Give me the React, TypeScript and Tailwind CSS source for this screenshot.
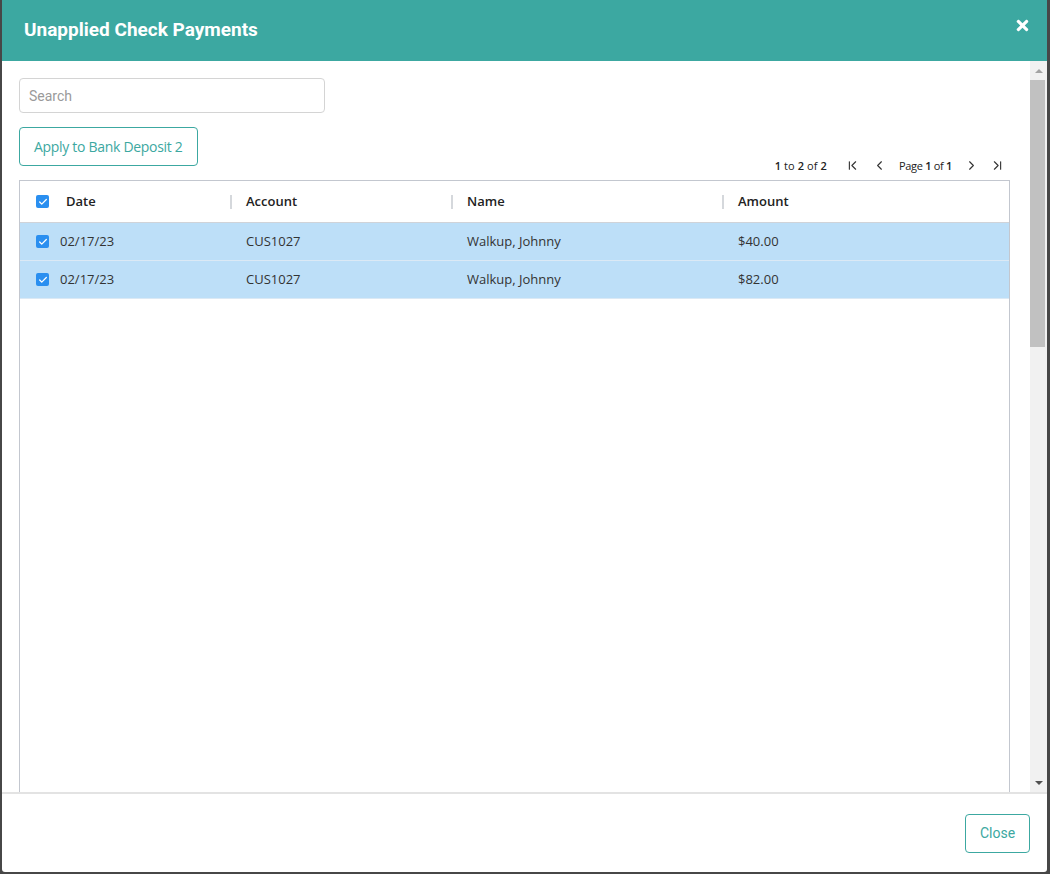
import React from 'react';
import { ChevronFirst, ChevronLast, ChevronLeft, ChevronRight, Check } from 'lucide-react';
import { FaTimes } from 'react-icons/fa';

const ROWS = [
  { date: '02/17/23', account: 'CUS1027', name: 'Walkup, Johnny', amount: '$40.00' },
  { date: '02/17/23', account: 'CUS1027', name: 'Walkup, Johnny', amount: '$82.00' },
];

function Box() {
  return (
    <span className="flex items-center justify-center w-[13px] h-[13px] rounded-[2px] bg-[#2a8ff0] shrink-0">
      <Check className="w-[10px] h-[10px] text-white" strokeWidth={3} />
    </span>
  );
}

function Sep() {
  return <span className="w-[2px] h-[14px] bg-[#d5d8dc] shrink-0" />;
}

export default function App() {
  return (
    <div className="h-[874px] w-[1050px] bg-[#474747] pl-[2px] pr-[3px] pb-[2px] font-['Roboto',sans-serif]">
      <div className="h-full flex flex-col bg-white rounded-b-[3px] overflow-hidden">

        {/* Header */}
        <div className="h-[61px] shrink-0 bg-[#3ca8a1] flex items-center justify-between pl-[22px] pr-[16px]">
          <h1 className="text-[19px] font-bold text-white">Unapplied Check Payments</h1>
          <FaTimes className="text-white w-[17px] h-[17px] -mt-[10px]" />
        </div>

        {/* Body */}
        <div className="flex-1 flex min-h-0">
          <div className="flex-1 flex flex-col min-h-0 pl-[17px] pr-[20px] pt-[17px]">
            <input
              placeholder="Search"
              className="w-[306px] h-[35px] border border-[#d4d4d4] rounded-[4px] px-[9px] text-[14px] text-[#333] placeholder:text-[#9a9a9a] outline-none font-['Roboto',sans-serif]"
            />

            <div className="flex items-start justify-between h-[53px] mt-[14px]">
              <button className="h-[39px] px-[14px] border border-[#3ca8a1] rounded-[4px] text-[#3ca8a1] text-[14px] font-['Open_Sans',sans-serif] tracking-[-0.3px]">
                Apply to Bank Deposit 2
              </button>
              <div className="self-end pb-[6px] pr-[5px] flex items-center text-[11px] text-[#222] font-['Open_Sans',sans-serif]">
                <span className="tracking-[0.1px]"><b className="font-semibold">1</b> to <b className="font-semibold">2</b> of <b className="font-semibold">2</b></span>
                <ChevronFirst className="w-[15px] h-[15px] ml-[18px] text-[#333]" strokeWidth={1.8} />
                <ChevronLeft className="w-[15px] h-[15px] ml-[12px] text-[#333]" strokeWidth={1.8} />
                <span className="ml-[12px] tracking-[-0.3px]">Page <b className="font-semibold">1</b> of <b className="font-semibold">1</b></span>
                <ChevronRight className="w-[15px] h-[15px] ml-[12px] text-[#333]" strokeWidth={1.8} />
                <ChevronLast className="w-[15px] h-[15px] ml-[11px] text-[#333]" strokeWidth={1.8} />
              </div>
            </div>

            {/* Grid */}
            <div className="flex-1 border border-[#c3c7cf] border-b-0 font-['Open_Sans',sans-serif] text-[13px] text-[#222]">
              <div className="grid grid-cols-[210px_221px_271px_1fr] h-[42px] border-b border-[#d0d3d8] font-semibold">
                <div className="flex items-center pl-[16px] gap-[17px]">
                  <Box />
                  <span>Date</span>
                </div>
                <div className="flex items-center gap-[14px]"><Sep /><span>Account</span></div>
                <div className="flex items-center gap-[14px]"><Sep /><span>Name</span></div>
                <div className="flex items-center gap-[14px]"><Sep /><span>Amount</span></div>
              </div>
              {ROWS.map((r, i) => (
                <div
                  key={i}
                  className="grid grid-cols-[210px_221px_271px_1fr] h-[38px] bg-[#bddff8] border-b border-[#dbe9f5] text-[#333]"
                >
                  <div className="flex items-center pl-[16px] gap-[11px]">
                    <Box />
                    <span>{r.date}</span>
                  </div>
                  <div className="flex items-center pl-[16px]">{r.account}</div>
                  <div className="flex items-center pl-[16px]">{r.name}</div>
                  <div className="flex items-center pl-[16px]">{r.amount}</div>
                </div>
              ))}
            </div>
          </div>

          {/* Scrollbar */}
          <div className="w-[17px] shrink-0 bg-[#f1f1f1] flex flex-col items-center">
            <div className="h-[19px] flex items-center justify-center">
              <span className="w-0 h-0 border-l-[4px] border-r-[4px] border-b-[4px] border-l-transparent border-r-transparent border-b-[#a3a3a3]" />
            </div>
            <div className="w-[15px] h-[267px] bg-[#c1c1c1] self-start" />
            <div className="flex-1" />
            <div className="h-[19px] flex items-center justify-center">
              <span className="w-0 h-0 border-l-[4px] border-r-[4px] border-t-[4px] border-l-transparent border-r-transparent border-t-[#505050]" />
            </div>
          </div>
        </div>

        {/* Footer */}
        <div className="h-[80px] shrink-0 border-t-2 border-[#e3e3e3] flex items-center justify-end pr-[17px]">
          <button className="h-[39px] w-[65px] border border-[#3ca8a1] rounded-[4px] text-[#3ca8a1] text-[14px] font-['Roboto',sans-serif]">
            Close
          </button>
        </div>
      </div>
    </div>
  );
}
